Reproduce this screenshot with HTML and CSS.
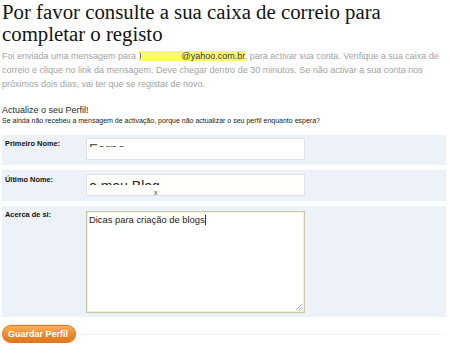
FILE: index.html
```html
<!DOCTYPE html>
<html lang="pt">
<head>
<meta charset="utf-8">
<title>Registo</title>
<link rel="stylesheet" href="styles.css">
</head>
<body>
<div class="page">
  <h1 class="title">Por favor consulte a sua caixa de correio para completar o registo</h1>
  <p class="info">Foi enviada uma mensagem para <span class="mail"><span class="redact"></span>@yahoo.com.br</span>, para activar sua conta. Verifique a sua caixa de correio e clique no link da mensagem. Deve chegar dentro de 30 minutos. Se não activar a sua conta nos próximos dois dias, vai ter que se registar de novo.</p>
  <h2 class="sub">Actualize o seu Perfil!</h2>
  <p class="hint">Se ainda não recebeu a mensagem de activação, porque não actualizar o seu perfil enquanto espera?</p>
  <div class="form">
    <div class="row row-first">
      <div class="label">Primeiro Nome:</div>
      <div class="field"><div class="input"><span class="clip clip-first">Ferna</span></div></div>
    </div>
    <div class="row row-last">
      <div class="label">Último Nome:</div>
      <div class="field"><div class="input input-last"><span class="clip clip-last">o meu Blog</span><span class="mark">x</span></div></div>
    </div>
    <div class="row row-about">
      <div class="label">Acerca de si:</div>
      <div class="field"><div class="textarea">Dicas para criação de blogs<span class="caret"></span><svg class="grip" width="8" height="8" viewBox="0 0 8 8"><path d="M7 1 L1 7 M7 4 L4 7 M7 6.5 L6.5 7" stroke="#b8b8b8" stroke-width="1"/></svg></div></div>
    </div>
  </div>
  <div class="actions">
    <button class="btn" type="button">Guardar Perfil</button>
    <div class="rule"></div>
  </div>
</div>
</body>
</html>
```
FILE: styles.css
```css
html, body {
  margin: 0;
  padding: 0;
  background: #ffffff;
}
.page {
  padding: 0 4px 0 2px;
  font-family: "Liberation Sans", Arial, sans-serif;
}
.title {
  margin: 0;
  padding-top: 1px;
  font-family: "Liberation Serif", "Times New Roman", serif;
  font-weight: normal;
  font-size: 20.8px;
  line-height: 22px;
  color: #141414;
}
.info {
  margin: 4px 0 0;
  font-size: 9px;
  line-height: 14px;
  color: #a3a3a3;
}
.mail {
  background: #fbfb66;
  color: #3a3a2a;
  padding: 0 0 0 1px;
}
.redact {
  display: inline-block;
  width: 41px;
  height: 6px;
  border-left: 1px solid #777;
  vertical-align: 0;
}
.sub {
  margin: 13px 0 0;
  font-size: 9px;
  font-weight: normal;
  line-height: 12px;
  color: #2a2a2a;
}
.hint {
  margin: 0;
  font-size: 7px;
  line-height: 10px;
  color: #222;
}
.form {
  margin-top: 9px;
  display: flex;
  flex-direction: column;
  gap: 5px;
}
.row {
  display: flex;
  background: #edf2f9;
}
.row-first {
  height: 30px;
  padding-top: 3px;
  box-sizing: border-box;
}
.row-last {
  height: 31px;
  padding-top: 4px;
  box-sizing: border-box;
}
.row-about {
  height: 111px;
  padding-top: 3px;
  box-sizing: border-box;
}
.label {
  width: 81px;
  padding-left: 3px;
  padding-top: 1px;
  font-size: 7.4px;
  font-weight: bold;
  color: #111;
}
.field {
  display: flex;
}
.input {
  width: 219px;
  height: 22px;
  box-sizing: border-box;
  background: #ffffff;
  border: 1px solid #dde2ea;
  position: relative;
  overflow: hidden;
}
.input-last {
  background: #fffffb;
}
.clip {
  position: absolute;
  left: 2px;
  overflow: hidden;
  font-size: 14px;
  line-height: 16px;
  color: #222;
  white-space: nowrap;
}
.clip-first {
  top: 2px;
  height: 6px;
  color: #555;
}
.clip-last {
  top: 3px;
  height: 7px;
}
.mark {
  position: absolute;
  left: 67px;
  top: 14px;
  font-size: 7px;
  line-height: 7px;
  color: #444;
}
.textarea {
  margin-top: 2px;
  width: 219px;
  height: 102px;
  box-sizing: border-box;
  background: #ffffff;
  border: 1px solid #cbc8a6;
  box-shadow: inset 0 0 0 1px #f0efe2;
  padding: 2px 2px;
  font-size: 9.4px;
  line-height: 11px;
  color: #222;
  position: relative;
}
.caret {
  display: inline-block;
  width: 1px;
  height: 10px;
  background: #333;
  vertical-align: -2px;
}
.grip {
  position: absolute;
  right: 1px;
  bottom: 1px;
}
.actions {
  margin-top: 8px;
  display: flex;
  align-items: center;
  gap: 4px;
}
.btn {
  height: 18px;
  width: 74px;
  border: 1px solid #d9782a;
  border-radius: 9px;
  background: linear-gradient(#f8b25c, #ea8a2c 55%, #e0781c);
  color: #ffffff;
  font-family: "Liberation Sans", Arial, sans-serif;
  font-weight: bold;
  font-size: 9px;
  text-align: left;
  padding: 0 0 0 5px;
  box-shadow: 0 0 2px #f3c48e;
}
.rule {
  flex: 1;
  border-top: 1px dotted #ececec;
}
```
